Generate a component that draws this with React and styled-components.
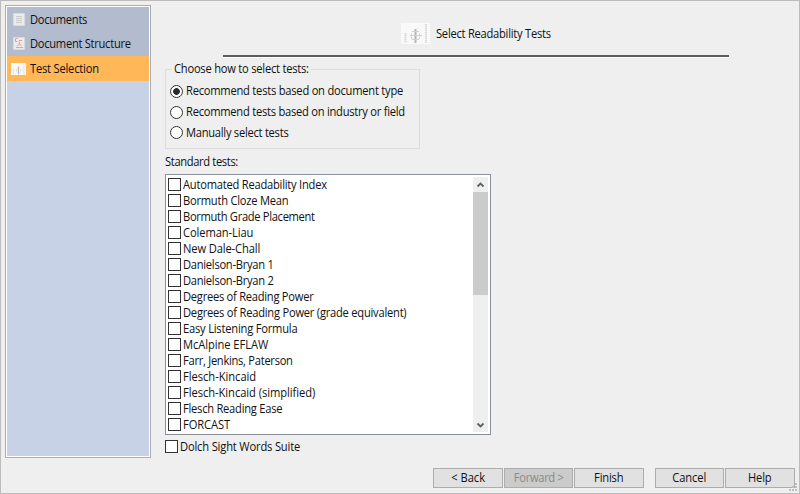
import React from "react";
import styled, { createGlobalStyle } from "styled-components";

const GlobalStyle = createGlobalStyle`
  * { box-sizing: border-box; }
  body { margin: 0; background: #efefef; }
`;

const Dialog = styled.div`
  width: 800px;
  height: 494px;
  display: grid;
  grid-template-columns: 146px 1fr;
  grid-template-rows: 453px 1fr;
  padding: 4px 0 0 4px;
  border: 1px solid #bcbcbc;
  background: #efefef;
  color: #111;
  font: 12px/16px "Open Sans", "Noto Sans", sans-serif;
  position: relative;
  overflow: hidden;
`;

/* Slightly condensed text, with tracking tuned per string. */
const Label = styled.span`
  display: inline-block;
  white-space: nowrap;
  letter-spacing: ${(p) => (((p.$track ?? -0.42) + 0.175) / 0.93).toFixed(3)}px;
  transform: scaleX(0.93);
  transform-origin: ${(p) => (p.$center ? "center" : "left")};
`;

const Sidebar = styled.nav`
  border: 1px solid #a9adb5;
  background: #c8d2e7;
  box-shadow: inset 0 0 0 1px #fff;
  padding: 1px;
`;

const NavItem = styled.div`
  height: 24.5px;
  display: flex;
  align-items: center;
  padding: 1px 0 0 4px;
  gap: 4px;
  background: ${(p) => (p.$active ? "#ffb757" : "#b3bccf")};
`;

const NavIcon = styled.svg`
  width: 15px;
  height: ${(p) => p.$h ?? 16}px;
  flex: none;
`;

const Main = styled.main`
  padding-left: 14px;
  display: flex;
  flex-direction: column;
`;

const Header = styled.header`
  width: 506px;
  height: 52px;
  margin-left: 58px;
  border-bottom: 2px solid #5d5d5d;
  box-shadow: 0 1px 0 #fff;
  display: flex;
  align-items: center;
  padding: 7px 0 0 178px;
  gap: 6px;
`;

const HeaderIcon = styled.svg`
  width: 29px;
  height: 21px;
`;

const Group = styled.fieldset`
  width: 255px;
  height: 88px;
  margin: 4px 0 0;
  border: 1px solid #dcdcdc;
  padding: 4px 0 0 4px;
  min-width: 0;
`;

const Legend = styled.legend`
  width: 138px;
  margin-left: 2px;
  padding: 0 2px;
  height: 16px;
`;

const RadioRow = styled.div`
  height: 20.7px;
  display: flex;
  align-items: center;
  gap: 3px;
`;

const Radio = styled.span`
  width: 13px;
  height: 13px;
  flex: none;
  border: 1px solid #333;
  border-radius: 50%;
  background: ${(p) => (p.$on ? "radial-gradient(circle, #2b2b2b 3px, #fff 3.7px)" : "#fff")};
`;

const ListTitle = styled.div`
  height: 16px;
  margin-top: 5px;
`;

const ListBox = styled.div`
  width: 326px;
  height: 261px;
  margin-top: 4px;
  border: 1px solid #8b8f99;
  background: #fff;
  padding: 2px;
  display: flex;
  justify-content: space-between;
`;

const CheckRow = styled.div`
  height: 16px;
  display: flex;
  align-items: center;
  gap: 2px;
`;

const Check = styled.span`
  width: 13px;
  height: 13px;
  margin-bottom: 1px;
  flex: none;
  border: 1px solid #333;
  background: #fff;
`;

const Scrollbar = styled.div`
  width: 15px;
  background: #efefef;
  display: flex;
  flex-direction: column;
`;

const Arrow = styled.svg`
  width: 15px;
  height: 15px;
  flex: none;
`;

const Thumb = styled.div`
  height: 103px;
  margin-bottom: auto;
  background: #cbcbcb;
`;

const DolchRow = styled(CheckRow)`
  margin-top: 4px;
`;

const Footer = styled.footer`
  grid-column: 1 / -1;
  display: flex;
  justify-content: flex-end;
  padding: 10px 4.5px 0 0;
  gap: 1px;
`;

const Button = styled.button`
  width: 69.5px;
  height: 20px;
  padding: 0;
  border: 1px solid #adadad;
  background: ${(p) => (p.disabled ? "#cbcbcb" : "#e1e1e1")};
  color: ${(p) => (p.disabled ? "#8a8a8a" : "#111")};
  font: inherit;
  line-height: 18px;
  margin-left: ${(p) => (p.$apart ? 10 : 0)}px;
`;

const Grip = styled.svg`
  position: absolute;
  right: 1px;
  bottom: 1px;
  width: 9px;
  height: 9px;
`;

const PageIcon = ({ marked }) => (
  <NavIcon viewBox="0 0 15 16">
    <path d="M2.5 1.5h11v12h-11z" fill="#ebebeb" stroke="#dadada" />
    {marked ? (
      <>
        <path d="M6.5 2.5H4.5v3H6.5M8 4.500h3" fill="none" stroke="#eb9a9a" />
        <path d="M8 5.500l1 2-3 2.500M8 7.500l2.500 2.500M5 11.500h7" stroke="#e3a0a0" fill="none" />
      </>
    ) : (
      <path d="M5 4.500h6M5 6.500h6M5 8.500h6M5 10.500h6" stroke="#cacaca" />
    )}
  </NavIcon>
);

const ChartShapes = () => (
  <>
    <path fill="#f9f9f9" d="M0 0h29v21H0z" />
    <path d="M4.500 10v10M25 1v19" stroke="#dadada" strokeWidth="2" strokeDasharray="1.500 .5" />
    <path d="M14.500 6v14" stroke="#b4b4b4" strokeWidth="2" />
    <path d="M10.500 10v6M18.500 10v6" stroke="#d8d8d8" />
    <path d="M9 12.500h12M11 8.500h7M11 16.500h7" stroke="#d0d0d0" />
  </>
);

const radios = [
  ["Recommend tests based on document type", true, -0.41],
  ["Recommend tests based on industry or field", false, -0.43],
  ["Manually select tests", false, -0.44],
];

const tests = [
  ["Automated Readability Index", -0.41],
  ["Bormuth Cloze Mean", -0.42],
  ["Bormuth Grade Placement", -0.49],
  ["Coleman-Liau", -0.27],
  ["New Dale-Chall", -0.3],
  ["Danielson-Bryan 1", -0.45],
  ["Danielson-Bryan 2", -0.45],
  ["Degrees of Reading Power", -0.44],
  ["Degrees of Reading Power (grade equivalent)", -0.41],
  ["Easy Listening Formula", -0.39],
  ["McAlpine EFLAW", -0.24],
  ["Farr, Jenkins, Paterson", -0.46],
  ["Flesch-Kincaid", -0.21],
  ["Flesch-Kincaid (simplified)", -0.23],
  ["Flesch Reading Ease", -0.43],
  ["FORCAST", -0.26],
];

export default function App() {
  return (
    <>
      <GlobalStyle />
      <Dialog>
        <Sidebar>
          <NavItem><PageIcon /><Label $track={-0.47}>Documents</Label></NavItem>
          <NavItem><PageIcon marked /><Label $track={-0.46}>Document Structure</Label></NavItem>
          <NavItem $active>
            <NavIcon $h={12} viewBox="0 0 29 21" preserveAspectRatio="none"><ChartShapes /></NavIcon>
            <Label $track={-0.39}>Test Selection</Label>
          </NavItem>
        </Sidebar>
        <Main>
          <Header>
            <HeaderIcon viewBox="0 0 29 21"><ChartShapes /></HeaderIcon>
            <Label $track={-0.43}>Select Readability Tests</Label>
          </Header>
          <Group>
            <Legend><Label $track={-0.41}>Choose how to select tests:</Label></Legend>
            {radios.map(([text, on, track]) => (
              <RadioRow key={text}><Radio $on={on} /><Label $track={track}>{text}</Label></RadioRow>
            ))}
          </Group>
          <ListTitle><Label $track={-0.53}>Standard tests:</Label></ListTitle>
          <ListBox>
            <div>
              {tests.map(([text, track]) => (
                <CheckRow key={text}><Check /><Label $track={track}>{text}</Label></CheckRow>
              ))}
            </div>
            <Scrollbar>
              <Arrow viewBox="0 0 15 15"><path d="M4.500 9.500L7.500 6.500L10.500 9.500" fill="none" stroke="#606060" strokeWidth="1.800" /></Arrow>
              <Thumb />
              <Arrow viewBox="0 0 15 15"><path d="M4.500 6.500L7.500 9.500L10.500 6.500" fill="none" stroke="#606060" strokeWidth="1.800" /></Arrow>
            </Scrollbar>
          </ListBox>
          <DolchRow><Check /><Label $track={-0.35}>Dolch Sight Words Suite</Label></DolchRow>
        </Main>
        <Footer>
          <Button><Label $center $track={-0.2}>&lt; Back</Label></Button>
          <Button disabled><Label $center $track={-0.5}>Forward &gt;</Label></Button>
          <Button><Label $center $track={-0.38}>Finish</Label></Button>
          <Button $apart><Label $center $track={-0.27}>Cancel</Label></Button>
          <Button><Label $center $track={-0.3}>Help</Label></Button>
        </Footer>
        <Grip viewBox="0 0 9 9">
          <path d="M6 0h2v2h-2zM3 3h2v2h-2zM6 3h2v2h-2zM0 6h2v2h-2zM3 6h2v2h-2zM6 6h2v2h-2z" fill="#bdbdbd" />
        </Grip>
      </Dialog>
    </>
  );
}
